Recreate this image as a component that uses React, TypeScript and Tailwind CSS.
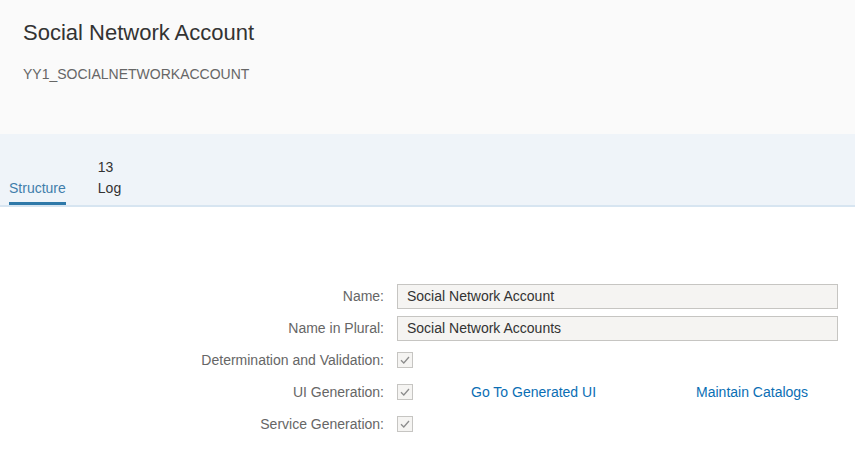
import React from 'react';

const FONT = { fontFamily: '"Liberation Sans", Arial, sans-serif' };

function Check() {
  return (
    <span className="flex h-[16px] w-[16px] items-center justify-center border border-[#c6c5c2] bg-[#f5f4f2]">
      <svg width="10" height="8" viewBox="0 0 10 8" fill="none">
        <path d="M1 4.2 L3.8 7 L9 1" stroke="#8c8c8c" strokeWidth="1.3" />
      </svg>
    </span>
  );
}

function Field({ value }: { value: string }) {
  return (
    <div className="flex h-[25px] items-center border border-[#c6c5c2] bg-[#f5f4f2] pl-[9px] text-[14px] text-[#333]">
      {value}
    </div>
  );
}

const ROWS: { label: string; content: React.ReactNode }[] = [
  { label: 'Name:', content: <Field value="Social Network Account" /> },
  { label: 'Name in Plural:', content: <Field value="Social Network Accounts" /> },
  { label: 'Determination and Validation:', content: <Check /> },
  {
    label: 'UI Generation:',
    content: (
      <div className="flex items-center">
        <Check />
        <a className="ml-[58px] text-[14px] text-[#0a6eb4]">Go To Generated UI</a>
        <a className="ml-[100px] text-[14px] text-[#0a6eb4]">Maintain Catalogs</a>
      </div>
    ),
  },
  { label: 'Service Generation:', content: <Check /> },
];

export default function App() {
  return (
    <div className="h-[467px] w-[855px] overflow-hidden bg-white" style={FONT}>
      {/* Header */}
      <div className="h-[134px] bg-[#fafafa] px-[23px] pt-[20px]">
        <h1 className="text-[22px] leading-[26px] text-[#333]">Social Network Account</h1>
        <p className="mt-[20px] text-[14px] leading-[16px] text-[#666]">YY1_SOCIALNETWORKACCOUNT</p>
      </div>

      {/* Tabs */}
      <div className="flex h-[73px] items-end border-b-2 border-[#d7e5f1] bg-[#eff4f9] px-[9px]">
        <div className="border-b-[3px] border-[#2f79a9] pb-[6px] text-[14px] leading-[16px] text-[#3f7eab]">
          Structure
        </div>
        <div className="ml-[32px] pb-[9px] text-[14px] leading-[16px] text-[#333]">
          <div className="mb-[5px]">13</div>
          <div>Log</div>
        </div>
      </div>

      {/* Form */}
      <div className="grid grid-cols-[384px_441px] gap-x-[13px] pt-[73px]">
        {ROWS.map((row) => (
          <React.Fragment key={row.label}>
            <div className="flex h-[32px] items-center justify-end text-[14px] text-[#666]">{row.label}</div>
            <div className="flex h-[32px] items-center">
              <div className="w-full">{row.content}</div>
            </div>
          </React.Fragment>
        ))}
      </div>
    </div>
  );
}
